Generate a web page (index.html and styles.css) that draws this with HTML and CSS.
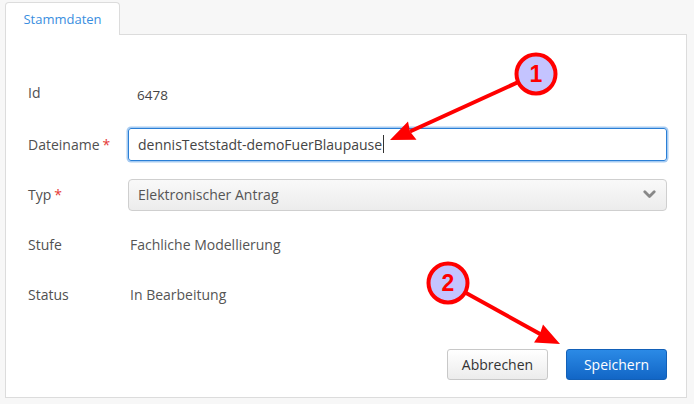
FILE: index.html
```html
<!DOCTYPE html>
<html lang="de">
<head>
<meta charset="utf-8">
<title>Stammdaten</title>
<link rel="stylesheet" href="styles.css">
</head>
<body>
<div class="page">
  <div class="tabs">
    <div class="tab active">Stammdaten</div>
  </div>
  <div class="panel">
    <div class="form">
      <div class="row">
        <div class="label label-id">Id</div>
        <div class="value static">6478</div>
      </div>
      <div class="row">
        <div class="label">Dateiname<span class="req">*</span></div>
        <div class="input focused"><span class="text">dennisTeststadt-demoFuerBlaupause</span><span class="caret"></span></div>
      </div>
      <div class="row">
        <div class="label">Typ<span class="req">*</span></div>
        <div class="select">
          <span class="text">Elektronischer Antrag</span>
          <svg class="chev" width="13" height="9" viewBox="0 0 13 9"><path d="M1.8 1.8 L6.5 6.5 L11.2 1.8" fill="none" stroke="#888" stroke-width="2.8" stroke-linecap="round" stroke-linejoin="round"/></svg>
        </div>
      </div>
      <div class="row">
        <div class="label">Stufe</div>
        <div class="value">Fachliche Modellierung</div>
      </div>
      <div class="row">
        <div class="label">Status</div>
        <div class="value">In Bearbeitung</div>
      </div>
    </div>
    <div class="actions">
      <button class="btn btn-default">Abbrechen</button>
      <button class="btn btn-primary">Speichern</button>
    </div>
  </div>
</div>
<svg class="annot" width="694" height="404" viewBox="0 0 694 404">
  <line x1="536" y1="74" x2="410" y2="131.5" stroke="#ff0000" stroke-width="4"/>
  <polygon points="390,140 408,121.4 410,131.5 416.5,139.8" fill="#ff0000"/>
  <line x1="448" y1="283" x2="541" y2="334.5" stroke="#ff0000" stroke-width="4"/>
  <polygon points="560,344 543,324.4 540,333.5 534,342.4" fill="#ff0000"/>
  <circle cx="536" cy="74" r="19.5" fill="#c4c4ff" stroke="#ff0000" stroke-width="4"/>
  <text x="536" y="82" class="num">1</text>
  <circle cx="448" cy="283" r="19.5" fill="#c4c4ff" stroke="#ff0000" stroke-width="4"/>
  <text x="448" y="291" class="num">2</text>
</svg>
</body>
</html>
```
FILE: styles.css
```css
html, body {
  margin: 0;
  padding: 0;
  background: #f7f7f7;
  font-family: "Open Sans", "DejaVu Sans", sans-serif;
  color: #555;
}
.page {
  padding: 2px 0 0 5px;
  width: 682px;
}
.tabs {
  display: flex;
  height: 32px;
}
.tab {
  width: 113px;
  height: 32px;
  background: #fff;
  border: 1px solid #dcdcdc;
  border-bottom: none;
  border-radius: 4px 4px 0 0;
  color: #3a8ee0;
  font-size: 13px;
  display: flex;
  align-items: center;
  justify-content: center;
  position: relative;
  z-index: 1;
}
.panel {
  background: #fff;
  border: 1px solid #dcdcdc;
  height: 364px;
  box-sizing: border-box;
  display: flex;
  flex-direction: column;
  padding: 42px 19px 0 22px;
}
.form {
  display: flex;
  flex-direction: column;
  gap: 16px;
}
.row {
  display: flex;
  align-items: center;
  height: 34px;
}
.label {
  width: 100px;
  font-size: 14px;
  color: #505050;
  flex: none;
}
.label-id {
  margin-top: -4px;
}
.req {
  color: #e53935;
  margin-left: 3px;
}
.value {
  font-size: 14px;
  color: #555;
  padding-left: 2px;
}
.value.static {
  padding-left: 9px;
  padding-top: 2px;
  color: #444;
  font-size: 13.5px;
}
.input {
  box-sizing: border-box;
  width: 539px;
  height: 33px;
  border: 1px solid #2a7fd6;
  border-radius: 3px;
  box-shadow: 0 0 0 1.5px #a6cbf2;
  display: flex;
  align-items: center;
  padding-left: 9px;
  font-size: 14px;
  color: #444;
}
.caret {
  display: inline-block;
  width: 1px;
  height: 18px;
  background: #333;
  margin-left: 1px;
}
.select {
  box-sizing: border-box;
  width: 539px;
  height: 32px;
  margin-top: 1px;
  border: 1px solid #cfcfcf;
  border-radius: 4px;
  background: linear-gradient(#f9f9f9, #ececec);
  display: flex;
  align-items: center;
  justify-content: space-between;
  padding: 0 10px 0 9px;
  font-size: 14px;
  color: #555;
}
.actions {
  display: flex;
  justify-content: flex-end;
  gap: 18px;
  margin-top: 38px;
}
.btn {
  width: 101px;
  height: 31px;
  border-radius: 3px;
  font-family: "Open Sans", "DejaVu Sans", sans-serif;
  font-size: 14px;
  padding: 0;
}
.btn-default {
  background: linear-gradient(#ffffff, #ececec);
  border: 1px solid #c8c8c8;
  color: #333;
}
.btn-primary {
  background: linear-gradient(#2b8ae6, #1266c6);
  border: 1px solid #1260b8;
  color: #fff;
}
.annot {
  position: absolute;
  left: 0;
  top: 0;
  pointer-events: none;
}
.num {
  font-family: "Liberation Sans", Arial, sans-serif;
  font-weight: bold;
  font-size: 23px;
  fill: #ff0000;
  text-anchor: middle;
}
```
